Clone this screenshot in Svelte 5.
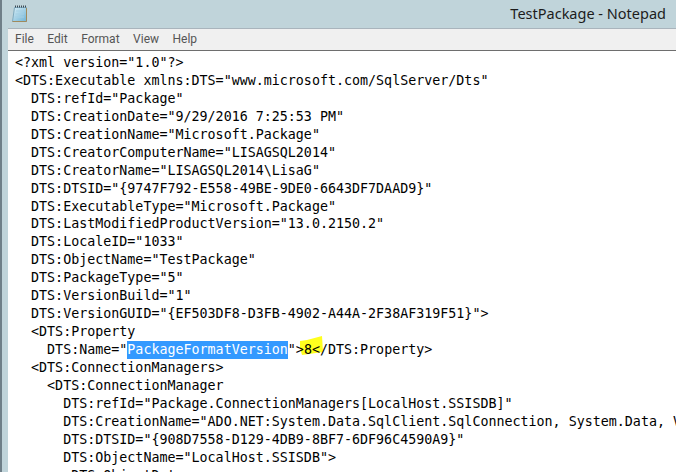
<script>
	const lines = [
		'<?xml version="1.0"?>',
		'<DTS:Executable xmlns:DTS="www.microsoft.com/SqlServer/Dts"',
		'  DTS:refId="Package"',
		'  DTS:CreationDate="9/29/2016 7:25:53 PM"',
		'  DTS:CreationName="Microsoft.Package"',
		'  DTS:CreatorComputerName="LISAGSQL2014"',
		'  DTS:CreatorName="LISAGSQL2014\\LisaG"',
		'  DTS:DTSID="{9747F792-E558-49BE-9DE0-6643DF7DAAD9}"',
		'  DTS:ExecutableType="Microsoft.Package"',
		'  DTS:LastModifiedProductVersion="13.0.2150.2"',
		'  DTS:LocaleID="1033"',
		'  DTS:ObjectName="TestPackage"',
		'  DTS:PackageType="5"',
		'  DTS:VersionBuild="1"',
		'  DTS:VersionGUID="{EF503DF8-D3FB-4902-A44A-2F38AF319F51}">',
		'  <DTS:Property'
	];
	const rest = [
		'  <DTS:ConnectionManagers>',
		'    <DTS:ConnectionManager',
		'      DTS:refId="Package.ConnectionManagers[LocalHost.SSISDB]"',
		'      DTS:CreationName="ADO.NET:System.Data.SqlClient.SqlConnection, System.Data, Version=4.0.0.0',
		'      DTS:DTSID="{908D7558-D129-4DB9-8BF7-6DF96C4590A9}"',
		'      DTS:ObjectName="LocalHost.SSISDB">',
		'      <DTS:ObjectData>'
	];
	const menu = ['File', 'Edit', 'Format', 'View', 'Help'];
</script>

<div class="window">
	<header class="titlebar">
		<svg class="app-icon" width="17" height="18" viewBox="0 0 17 18">
			<defs>
				<linearGradient id="page" x1="0" y1="0" x2="1" y2="1">
					<stop offset="0" stop-color="#d8eef6" />
					<stop offset="1" stop-color="#6fb4d6" />
				</linearGradient>
			</defs>
			<path d="M3.5 2.5H15.5V16.5H1.5Z" fill="url(#page)" stroke="#7fa9bd" />
			<path d="M1.5 16.5H15.5V3" fill="none" stroke="#a08a5c" />
			<path d="M4 1.5H15" stroke="#3c4a55" stroke-width="2" stroke-dasharray="1 1" />
			<path d="M5 6H13M4.5 9H13M4 12H13" stroke="#a5cfe3" />
		</svg>
		<span class="title">TestPackage - Notepad</span>
	</header>
	<div class="client">
		<nav class="menubar">
			{#each menu as item}
				<span>{item}</span>
			{/each}
		</nav>
		<div class="editor">
			{#each lines as line}
				<div class="line">{line}</div>
			{/each}
			<div class="line">{'    DTS:Name="'}<span class="sel">PackageFormatVersion</span>"&gt;<span class="mark"><svg class="scribble" width="26" height="24" viewBox="0 0 26 24"><path d="M2 6L9 5L24 1L25 17L4 20L2 13Z" fill="#ffff1e" /></svg>8&lt;</span>/DTS:Property&gt;</div>
			{#each rest as line}
				<div class="line">{line}</div>
			{/each}
		</div>
	</div>
</div>

<style>
	:global(body) {
		margin: 0;
		background: #c0d4da;
	}

	.window {
		width: 676px;
		height: 472px;
		box-sizing: border-box;
		overflow: hidden;
		display: flex;
		flex-direction: column;
		background: #c0d4da;
		border-left: 2px solid #6f7f88;
	}

	.titlebar {
		height: 28px;
		flex: none;
		display: flex;
		align-items: center;
		justify-content: space-between;
		padding: 0 10px 0 9px;
	}

	.title {
		font: 14.5px 'Noto Sans', sans-serif;
		color: #1c1c1c;
		margin-top: -2px;
	}

	.client {
		flex: 1;
		margin-left: 6px;
		display: flex;
		flex-direction: column;
		min-height: 0;
	}

	.menubar {
		height: 20px;
		flex: none;
		display: flex;
		gap: 13.5px;
		padding: 0 0 1px 7px;
		align-items: center;
		background: #f0f0f0;
		border-top: 1px solid #a9b4bc;
		border-bottom: 1px solid #6e6e6e;
		font: 12px Roboto, sans-serif;
		color: #555;
	}

	.editor {
		flex: 1;
		background: #fff;
		padding: 3px 0 0 7px;
		font: 13.33px/17.94px 'DejaVu Sans Mono', monospace;
		color: #000;
		overflow: hidden;
		isolation: isolate;
	}

	.line {
		white-space: pre;
		height: 17.94px;
	}

	.sel {
		display: inline-block;
		background: #3399ff;
		color: #fff;
	}

	.mark {
		position: relative;
		display: inline-block;
	}

	.scribble {
		position: absolute;
		left: -6px;
		top: -6px;
		z-index: -1;
	}
</style>
